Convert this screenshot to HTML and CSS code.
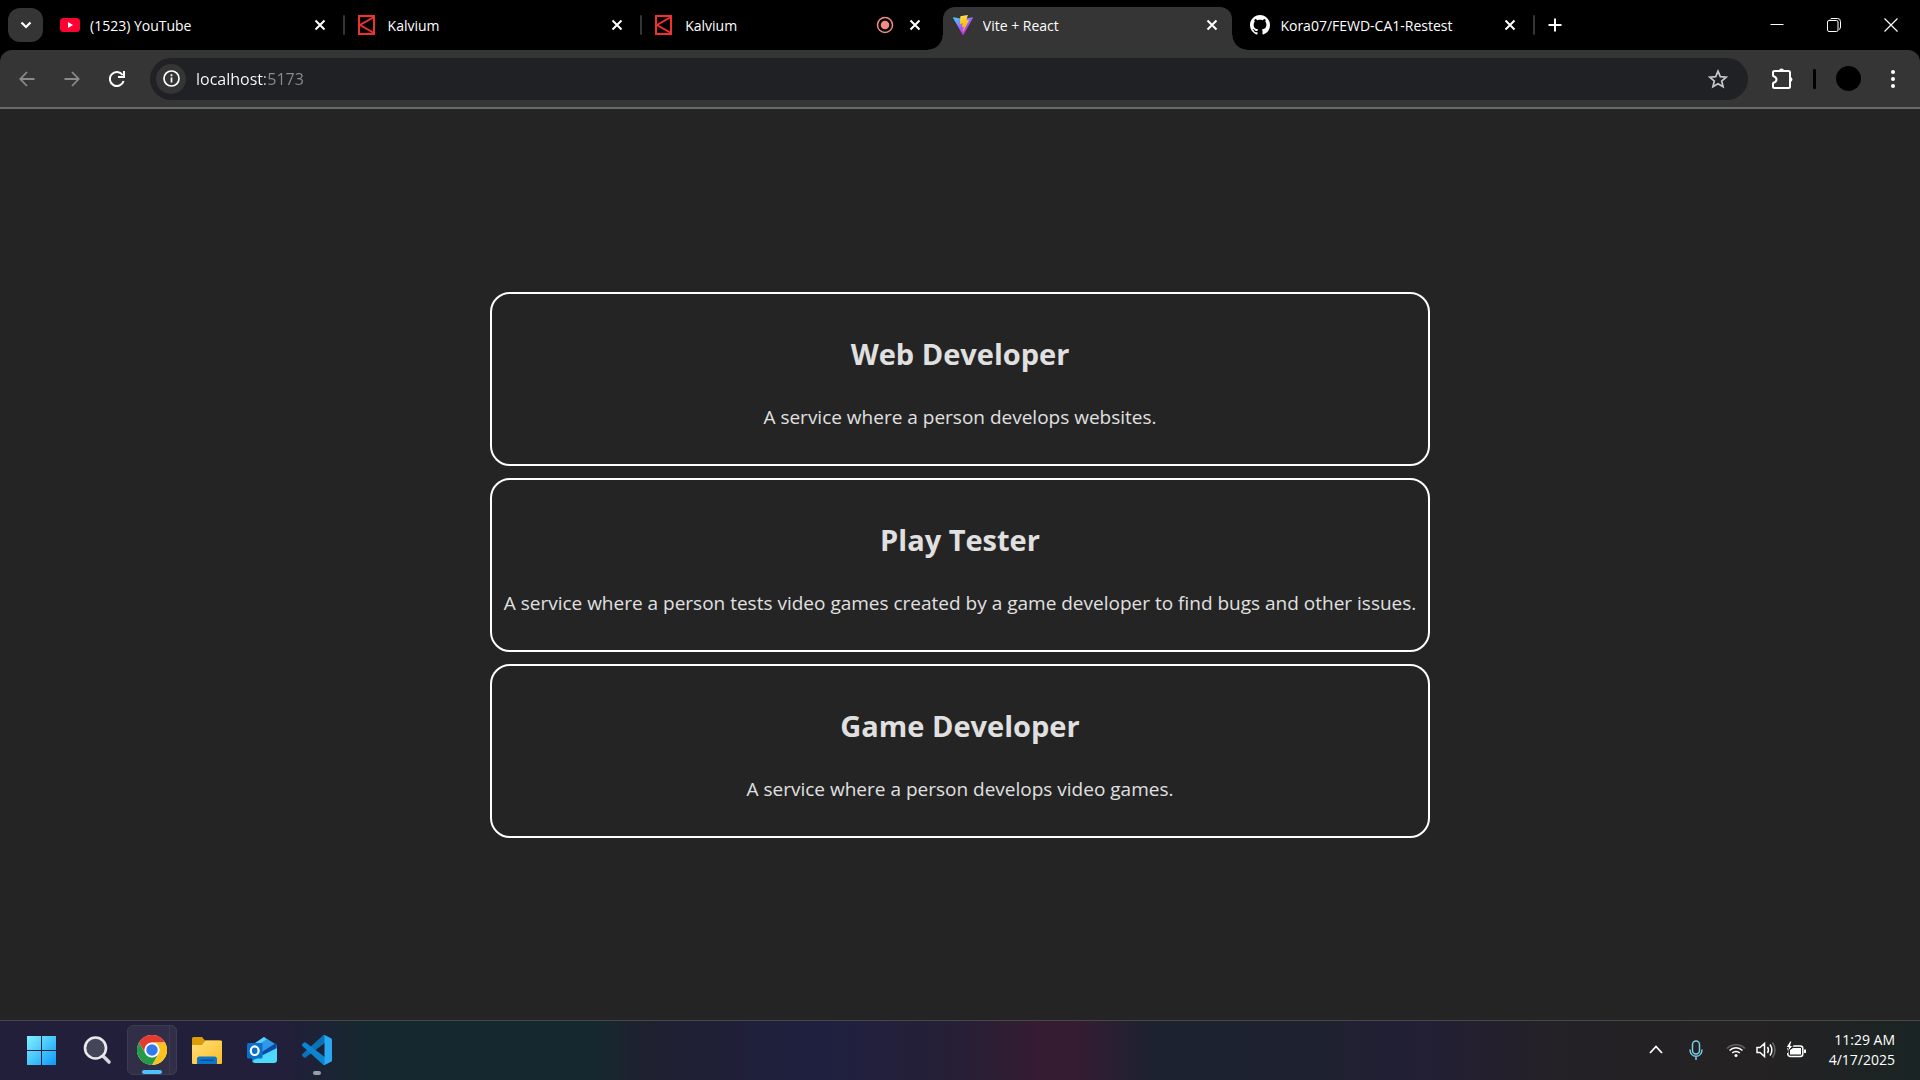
FILE: index.html
```html
<!DOCTYPE html>
<html lang="en">
<head>
<meta charset="utf-8">
<meta name="viewport" content="width=device-width, initial-scale=1">
<title>Vite + React</title>
<link rel="stylesheet" href="styles.css">
</head>
<body>
<header class="browser">
  <div class="tabstrip">
    <button class="tab-search" aria-label="Search tabs"><svg width="12" height="8" viewBox="0 0 12 8"><path d="M1.500 1.500l4.500 4.500 4.500-4.500" fill="none" stroke="#fff" stroke-width="2.200"/></svg></button>
    <ul class="tabs">
      <li class="tab divided">
        <svg class="favicon" viewBox="0 0 20 20"><rect y="3" width="20" height="14" rx="3.500" fill="#ff0033"/><path d="M8 7v6l5-3z" fill="#fff"/></svg>
        <span class="tab-title">(1523) YouTube</span>
        <button class="tab-close" aria-label="Close tab"><svg viewBox="0 0 12 12"><path d="M1.500 1.500l9 9m0-9l-9 9"/></svg></button>
      </li>
      <li class="tab divided">
        <svg class="favicon" viewBox="0 0 20 20"><path d="M1 1h15v18H1zM16 2L2 10l14 8" fill="none" stroke="#f23030" stroke-width="2"/></svg>
        <span class="tab-title">Kalvium</span>
        <button class="tab-close" aria-label="Close tab"><svg viewBox="0 0 12 12"><path d="M1.500 1.500l9 9m0-9l-9 9"/></svg></button>
      </li>
      <li class="tab">
        <svg class="favicon" viewBox="0 0 20 20"><path d="M1 1h15v18H1zM16 2L2 10l14 8" fill="none" stroke="#f23030" stroke-width="2"/></svg>
        <span class="tab-title">Kalvium</span>
        <svg class="recording" viewBox="0 0 18 18"><circle cx="9" cy="9" r="7.500" fill="none" stroke="#f28b82" stroke-width="1.500"/><circle cx="9" cy="9" r="4.300" fill="#f28b82"/></svg>
        <button class="tab-close" aria-label="Close tab"><svg viewBox="0 0 12 12"><path d="M1.500 1.500l9 9m0-9l-9 9"/></svg></button>
      </li>
      <li class="tab active">
        <svg class="favicon" viewBox="0 0 256 257">
          <defs>
            <linearGradient id="vite-body" x1="0" y1="0.020" x2="0.580" y2="0.780"><stop offset="0" stop-color="#41d1ff"/><stop offset="1" stop-color="#bd34fe"/></linearGradient>
            <linearGradient id="vite-bolt" x1="0.430" y1="0.020" x2="0.500" y2="0.890"><stop offset="0" stop-color="#ffea83"/><stop offset="0.080" stop-color="#ffdd35"/><stop offset="1" stop-color="#ffa800"/></linearGradient>
          </defs>
          <path fill="url(#vite-body)" d="M255.153 37.938L134.897 252.976c-2.483 4.440-8.862 4.466-11.382.048L.875 37.958c-2.746-4.814 1.371-10.646 6.827-9.670l120.385 21.517a6.537 6.537 0 0 0 2.322-.004l117.867-21.483c5.438-.991 9.574 4.796 6.877 9.620z"/>
          <path fill="url(#vite-bolt)" d="M185.432.063L96.440 17.501a3.268 3.268 0 0 0-2.634 3.014l-5.474 92.456a3.268 3.268 0 0 0 3.997 3.378l24.777-5.718c2.318-.535 4.413 1.507 3.936 3.838l-7.361 36.047c-.495 2.426 1.782 4.500 4.151 3.780l15.304-4.649c2.372-.720 4.652 1.360 4.150 3.788l-11.698 56.621c-.732 3.542 3.979 5.473 5.943 2.437l1.313-2.028 72.516-144.720c1.215-2.423-.880-5.186-3.540-4.672l-25.505 4.922c-2.396.462-4.435-1.770-3.759-4.114l16.646-57.705c.677-2.350-1.370-4.583-3.769-4.113z"/>
        </svg>
        <span class="tab-title">Vite + React</span>
        <button class="tab-close" aria-label="Close tab"><svg viewBox="0 0 12 12"><path d="M1.500 1.500l9 9m0-9l-9 9"/></svg></button>
      </li>
      <li class="tab divided">
        <svg class="favicon" viewBox="0 0 16 16"><path fill="#fff" d="M8 0C3.580 0 0 3.580 0 8c0 3.540 2.290 6.530 5.470 7.590.400.070.550-.170.550-.380 0-.190-.010-.820-.010-1.490-2.010.370-2.530-.490-2.690-.940-.090-.230-.480-.940-.820-1.130-.280-.150-.680-.520-.010-.530.630-.010 1.080.580 1.230.820.720 1.210 1.870.870 2.330.660.070-.520.280-.870.510-1.070-1.780-.200-3.640-.890-3.640-3.950 0-.870.310-1.590.820-2.150-.080-.200-.360-1.020.080-2.120 0 0 .670-.210 2.200.820.640-.180 1.320-.270 2-.270s1.360.090 2 .270c1.530-1.040 2.200-.820 2.200-.820.440 1.100.160 1.920.080 2.120.510.560.820 1.270.820 2.150 0 3.070-1.870 3.750-3.650 3.950.290.250.540.730.540 1.480 0 1.070-.010 1.930-.010 2.200 0 .210.150.460.550.380A8.010 8.010 0 0 0 16 8c0-4.420-3.580-8-8-8z"/></svg>
        <span class="tab-title">Kora07/FEWD-CA1-Restest</span>
        <button class="tab-close" aria-label="Close tab"><svg viewBox="0 0 12 12"><path d="M1.500 1.500l9 9m0-9l-9 9"/></svg></button>
      </li>
    </ul>
    <button class="new-tab" aria-label="New tab"><svg width="14" height="14" viewBox="0 0 14 14"><path d="M7 .500v13M.500 7h13" stroke="#fff" stroke-width="2"/></svg></button>
    <div class="window-controls">
      <button aria-label="Minimize"><svg width="14" height="14" viewBox="0 0 14 14"><path d="M.500 6.500h13" stroke="#fff"/></svg></button>
      <button aria-label="Restore"><svg width="14" height="14" viewBox="0 0 14 14" fill="none" stroke="#fff"><rect x=".500" y="2.500" width="10.500" height="11" rx="1.500"/><path d="M3 1.500Q3.500.500 5 .500h5.500q3 0 3 3V9q0 2-1.500 2.500"/></svg></button>
      <button aria-label="Close"><svg width="14" height="14" viewBox="0 0 14 14"><path d="M.500.500l13 13m0-13l-13 13" stroke="#fff" stroke-width="1.200"/></svg></button>
    </div>
  </div>
  <div class="toolbar">
    <div class="nav">
      <button aria-label="Back"><svg width="16" height="16" viewBox="0 0 16 16" fill="none" stroke="#8a8a8a" stroke-width="1.800"><path d="M15.500 8H1.500M8 1L1.300 8 8 15"/></svg></button>
      <button aria-label="Forward"><svg width="16" height="16" viewBox="0 0 16 16" fill="none" stroke="#8a8a8a" stroke-width="1.800"><path d="M.500 8h14M8 1l6.700 7L8 15"/></svg></button>
      <button aria-label="Reload"><svg width="16" height="16" viewBox="0 0 16 16" fill="none" stroke="#fff" stroke-width="2"><path d="M14.600 10A7 7 0 1 1 13.600 4M15 0v6H9"/></svg></button>
    </div>
    <div class="omnibox">
      <button class="site-info" aria-label="View site information"><svg width="17" height="17" viewBox="0 0 17 17"><circle cx="8.500" cy="8.500" r="7.500" fill="none" stroke="#fff" stroke-width="1.700"/><path d="M8.500 7.500v5M8.500 4.300v2" stroke="#fff" stroke-width="1.700"/></svg></button>
      <input class="url" type="text" aria-label="Address and search bar" value="localhost:5173" spellcheck="false">
      <button class="bookmark" aria-label="Bookmark this tab"><svg width="20" height="20" viewBox="0 0 20 20"><path d="M10 2.200l2.300 5.400 5.900.500-4.500 3.900 1.400 5.800-5.100-3.100-5.100 3.100 1.400-5.800-4.500-3.900 5.900-.500z" fill="none" stroke="#c7c7c7" stroke-width="1.700"/></svg></button>
    </div>
    <div class="actions">
      <button aria-label="Extensions"><svg width="22" height="22" viewBox="0 0 22 22"><rect x="2" y="3" width="17" height="17" rx="1.500" fill="none" stroke="#fff" stroke-width="2"/><path d="M0 8.500h2a3 3 0 0 1 0 6H0z" fill="#353535"/><path d="M2 8q3.500 1 3.500 3.500T2 15" fill="none" stroke="#fff" stroke-width="2"/><path d="M8 3a2.500 2.500 0 0 1 5 0zM19 9a2.500 2.500 0 0 1 0 5z" fill="#fff"/></svg></button>
      <span class="toolbar-rule"></span>
      <button aria-label="Profile"><span class="avatar"></span></button>
      <button aria-label="Customize and control"><svg width="4" height="18" viewBox="0 0 4 18" fill="#fff"><circle cx="2" cy="2" r="2"/><circle cx="2" cy="9" r="2"/><circle cx="2" cy="16" r="2"/></svg></button>
    </div>
  </div>
</header>

<main class="page">
  <article class="card">
    <h2>Web Developer</h2>
    <p>A service where a person develops websites.</p>
  </article>
  <article class="card">
    <h2>Play Tester</h2>
    <p>A service where a person tests video games created by a game developer to find bugs and other issues.</p>
  </article>
  <article class="card">
    <h2>Game Developer</h2>
    <p>A service where a person develops video games.</p>
  </article>
</main>

<footer class="taskbar">
  <nav class="apps" aria-label="Taskbar">
    <button class="app" aria-label="Start"><svg viewBox="0 0 30 30"><defs><linearGradient id="win" x1="0" y1="0" x2="30" y2="30" gradientUnits="userSpaceOnUse"><stop offset="0" stop-color="#84f3ff"/><stop offset="1" stop-color="#0a98f8"/></linearGradient></defs><path fill="url(#win)" d="M0 1h14v14H0zM15 1h14v14H15zM0 16h14v14H0zM15 16h14v14H15z"/></svg></button>
    <button class="app" aria-label="Search"><svg viewBox="0 0 30 30"><path d="M20 20l7 7" stroke="#d6d6dc" stroke-width="3.600" stroke-linecap="round"/><circle cx="13.500" cy="13" r="10.500" fill="#45455a" stroke="#e9e9ee" stroke-width="2.600"/></svg></button>
    <button class="app running current" aria-label="Google Chrome"><svg viewBox="0 0 48 48"><circle cx="24" cy="24" r="24" fill="#fff"/><path fill="#e33b2e" d="M3.200 12A24 24 0 0 1 44.800 12H24a12 12 0 0 0-10.400 18z"/><path fill="#fcc31e" d="M44.800 12A24 24 0 0 1 24 48l10.400-18A12 12 0 0 0 24 12z"/><path fill="#259b48" d="M24 48A24 24 0 0 1 3.200 12l10.400 18a12 12 0 0 0 20.800 0z"/><circle cx="24" cy="24" r="11.500" fill="#fff"/><circle cx="24" cy="24" r="9.200" fill="#3079ee"/></svg></button>
    <button class="app" aria-label="File Explorer"><svg viewBox="0 0 30 30"><defs><linearGradient id="folder" x1="0" y1="0" x2="1" y2="1"><stop offset="0" stop-color="#ffe07a"/><stop offset="1" stop-color="#fdbd26"/></linearGradient></defs><path fill="#dc9c08" d="M0 3.500Q0 2 1.500 2H10l3 3.500h15V12H0z"/><path fill="url(#folder)" d="M0 10h10l3.500-4.500H29q1 0 1 1V28q0 1-1 1H1q-1 0-1-1z"/><path fill="#0f75c8" d="M5 29v-5q0-2.500 2.500-2.500h15Q25 21.500 25 24v5z"/><path d="M8.500 25.200h13" stroke="#084f91" stroke-width="1.300"/></svg></button>
    <button class="app" aria-label="Outlook"><svg viewBox="0 0 30 30"><path fill="#1479d2" d="M5 10L17 2l13 8v15H5z"/><path fill="#5fd0f8" d="M17 2l4 3-12 8-4-3z"/><path fill="#2f9ae8" d="M20 4l8 5-16 10-6-6z"/><path fill="#0b4aa5" d="M29 8v8l-12 6-2-5z"/><path fill="#4cd9fb" d="M30 13v12q0 3-3 3H8q-2 0-3-2l11-6z"/><rect y="8" width="15.500" height="15.500" rx="1.500" fill="#0870cd"/><ellipse cx="7.700" cy="15.700" rx="3.900" ry="4.300" fill="none" stroke="#fff" stroke-width="2.200"/></svg></button>
    <button class="app running" aria-label="Visual Studio Code"><svg viewBox="0 0 100 100"><path fill="#0a73b8" d="M96.500 10.800L75.900.900a6.200 6.200 0 0 0-7.100 1.200L1.300 63.600a4.200 4.200 0 0 0 0 6.200l5.500 5a4.200 4.200 0 0 0 5.300.200L93.400 13.400a4.100 4.100 0 0 1 6.600 3.300v-.200a6.300 6.300 0 0 0-3.500-5.700z"/><path fill="#0c84d1" d="M96.500 89.200l-20.600 9.900a6.200 6.200 0 0 1-7.100-1.200L1.300 36.400a4.200 4.200 0 0 1 0-6.200l5.500-5a4.200 4.200 0 0 1 5.300-.200l81.300 61.600a4.100 4.100 0 0 0 6.600-3.300v.200a6.300 6.300 0 0 1-3.500 5.700z"/><path fill="#29a9f2" d="M75.900 99.100a6.200 6.200 0 0 1-7.100-1.200c2.300 2.300 6.200.700 6.200-2.600V4.700c0-3.300-3.900-4.900-6.200-2.600A6.200 6.200 0 0 1 75.900.900l20.600 9.900A6.200 6.200 0 0 1 100 16.500v67a6.200 6.200 0 0 1-3.500 5.700z"/></svg></button>
  </nav>
  <div class="tray">
    <button aria-label="Show hidden icons"><svg width="14" height="9" viewBox="0 0 14 9"><path d="M1 8l6-6.500L13 8" fill="none" stroke="#fff" stroke-width="1.800"/></svg></button>
    <button class="mic" aria-label="Microphone"><svg width="14" height="20" viewBox="0 0 14 20" fill="none" stroke="#76cfe6" stroke-width="1.500"><rect x="3.500" y="1" width="7" height="13" rx="3.500"/><path d="M1 9.500c0 9 12 9 12 0M7 16.500V20"/></svg></button>
    <button class="status" aria-label="Network, sound and battery">
      <svg width="20" height="16" viewBox="0 0 20 16" fill="none" stroke="#fff" stroke-width="1.500"><path d="M1 6.500a12.500 12.500 0 0 1 18 0" stroke="#636363"/><path d="M3.500 8.500a9 9 0 0 1 13 0M6.200 11a5.500 5.500 0 0 1 7.600 0"/><circle cx="10" cy="13.500" r="1.500" fill="#fff" stroke="none"/></svg>
      <svg width="20" height="18" viewBox="0 0 20 18" fill="none" stroke="#fff" stroke-width="1.500"><path d="M1 6.500h3l4.500-4v13L4 11.500H1zM11.500 6q2 3 0 6M14 3.500q3.800 5.500 0 11"/><path d="M16.500 1.500q5 7.500 0 15" stroke="#636363"/></svg>
      <svg width="20" height="18" viewBox="0 0 20 18"><rect x="1.800" y="5" width="15" height="10.500" rx="2.500" fill="none" stroke="#fff" stroke-width="1.500"/><path d="M4 13V9l3-2h8v6.500H4zM18 8.500h2v3.500h-2z" fill="#fff"/><path d="M4 0L0 6.500h2.500L1 12l6-7.500H4.500L6 0z" fill="#fff" stroke="#242123"/></svg>
    </button>
    <button class="clock"><time datetime="2025-04-17T11:29">11:29 AM<br>4/17/2025</time></button>
  </div>
</footer>
</body>
</html>
```
FILE: styles.css
```css
* {
  box-sizing: border-box;
}

body {
  display: flex;
  flex-direction: column;
  min-height: 100vh;
  margin: 0;
  background: #242424;
  color: #e0e0e0;
  font-family: "Open Sans", "Noto Sans", sans-serif;
}

button {
  display: flex;
  align-items: center;
  justify-content: center;
  padding: 0;
  border: 0;
  background: none;
  color: inherit;
  font: inherit;
}

svg {
  flex: none;
}

/* Browser chrome */
.browser {
  background: #000;
}

.tabstrip {
  display: flex;
  align-items: center;
  height: 50px;
  padding-left: 8px;
  color: #fff;
  font-size: 14px;
}

.tab-search {
  flex: none;
  width: 35px;
  height: 34px;
  margin-right: 3px;
  border-radius: 12px;
  background: #353535;
}

.tabs {
  display: grid;
  flex: 0 1 1488px;
  grid-template-columns: repeat(5, minmax(0, 1fr));
  height: 50px;
  margin: 0;
  padding: 0;
  list-style: none;
}

.tab {
  position: relative;
  display: flex;
  align-items: center;
  padding: 0 14px;
  isolation: isolate;
}

.divided::after {
  position: absolute;
  right: -1px;
  width: 2px;
  height: 20px;
  border-radius: 1px;
  background: #353535;
  content: "";
}

.active::before {
  position: absolute;
  z-index: -1;
  inset: 7px 4px 0;
  border-radius: 12px 12px 0 0;
  background: #353535;
  content: "";
}

.active::after {
  position: absolute;
  z-index: -1;
  right: -11px;
  bottom: 0;
  left: -11px;
  height: 15px;
  background:
    radial-gradient(circle at 0 0, transparent 14px, #353535 15px) left / 15px 15px no-repeat,
    radial-gradient(circle at 100% 0, transparent 14px, #353535 15px) right / 15px 15px no-repeat;
  content: "";
}

.favicon {
  width: 20px;
  height: 20px;
  margin-right: 10px;
}

.tab-title {
  flex: 1;
  overflow: hidden;
  white-space: nowrap;
}

.recording {
  width: 18px;
  height: 18px;
  margin-right: 11px;
}

.tab-close {
  width: 20px;
  height: 20px;
}

.tab-close svg {
  width: 12px;
  height: 12px;
  stroke: #fff;
  stroke-width: 2;
}

.new-tab {
  width: 28px;
  height: 28px;
  margin-left: 7px;
}

.window-controls {
  display: flex;
  margin-left: auto;
  padding-right: 1px;
}

.window-controls button {
  width: 57px;
  height: 50px;
}

.toolbar {
  display: flex;
  align-items: center;
  height: 59px;
  border-bottom: 2px solid #686969;
  border-radius: 12px 12px 0 0;
  background: #353535;
}

.nav {
  display: flex;
  gap: 9px;
  padding: 0 15px 0 9px;
}

.nav button {
  width: 36px;
  height: 36px;
}

.omnibox {
  display: flex;
  flex: 1;
  align-items: center;
  height: 42px;
  padding: 0 15px 0 6px;
  border-radius: 21px;
  background: #202124;
}

.site-info {
  width: 30px;
  height: 30px;
  border-radius: 50%;
  background: #353535;
}

.url {
  flex: 1;
  min-width: 0;
  margin-left: 10px;
  padding: 0;
  border: 0;
  outline: 0;
  background: linear-gradient(90deg, #fff 69px, #8c8c8c 69px);
  background-clip: text;
  color: transparent;
  font-family: inherit;
  font-size: 16px;
  line-height: 26px;
}

.bookmark {
  width: 30px;
  height: 30px;
}

.actions {
  display: flex;
  align-items: center;
  padding: 0 9px 0 16px;
}

.actions button {
  width: 36px;
  height: 36px;
}

.toolbar-rule {
  width: 3px;
  height: 20px;
  margin: 0 14px 0 13px;
  border-radius: 1px;
  background: #000;
}

.avatar {
  width: 25px;
  height: 25px;
  border-radius: 50%;
  background: #000;
}

.actions button:last-child {
  margin-left: 9px;
}

/* Page content */
.page {
  display: flex;
  flex: 1;
  flex-direction: column;
  align-items: center;
  justify-content: center;
  gap: 12px;
}

.card {
  width: 100%;
  max-width: 940px;
  padding: 12px 4px;
  border: 2px solid #fff;
  border-radius: 20px;
  text-align: center;
}

.card h2 {
  margin: 25px 0;
  font-size: 29px;
  font-weight: 700;
  line-height: 46px;
}

.card p {
  margin: 0 0 20px;
  font-size: 19px;
  line-height: 30px;
}

/* Taskbar */
.taskbar {
  display: flex;
  align-items: center;
  justify-content: space-between;
  height: 60px;
  padding-bottom: 2px;
  border-top: 1px solid #474747;
  background: linear-gradient(90deg, #211f3a 0%, #211f3a 15%, #16282f 19%, #16282f 31%, #1f2030 34%, #1f2040 43%, #261f35 50%, #351c33 54%, #351c33 56%, #1d2230 60%, #1e2230 68%, #231f35 74%, #242127 81%, #252223 91%, #1a2424 100%);
}

.apps {
  display: flex;
  gap: 5px;
  padding-left: 17px;
}

.app {
  position: relative;
  width: 50px;
  height: 50px;
}

.app svg {
  width: 30px;
  height: 30px;
}

.current {
  border: 1px solid #3c3b52;
  border-radius: 6px;
  background: #302f47;
}

.running::after {
  position: absolute;
  bottom: 0;
  width: 8px;
  height: 4px;
  border-radius: 2px;
  background: #9c9ca6;
  content: "";
}

.current::after {
  width: 20px;
  background: #4cc2ff;
}

/* Edge of the second window stacked behind the current one */
.current::before {
  position: absolute;
  top: -1px;
  right: -1px;
  bottom: -1px;
  width: 6px;
  border: 1px solid #3c3b52;
  border-radius: 0 6px 6px 0;
  content: "";
}

.tray {
  display: flex;
  align-items: center;
  padding-right: 15px;
}

.tray > button {
  width: 40px;
  height: 50px;
}

.tray > .status {
  gap: 10px;
  width: 100px;
}

.tray > .clock {
  justify-content: flex-end;
  width: 89px;
  padding-right: 10px;
  color: #fff;
  font-size: 14px;
  line-height: 20px;
  text-align: right;
  white-space: nowrap;
}
```
